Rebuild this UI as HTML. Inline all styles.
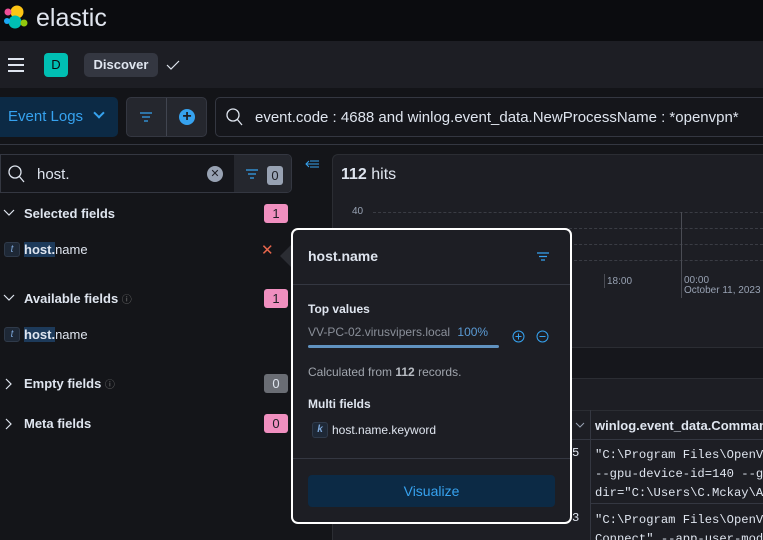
<!DOCTYPE html>
<html><head><meta charset="utf-8"><style>
*{box-sizing:border-box;margin:0;padding:0}
html,body{width:763px;height:540px;overflow:hidden}
body{background:#141519;font-family:"Liberation Sans",sans-serif;color:#dfe5ef;position:relative}
.a{position:absolute}
.b{font-weight:bold}
.badge{position:absolute;width:24px;height:19px;border-radius:3px;font-size:13px;text-align:center;line-height:19px;color:#1d1e24}
.mono{font-family:"Liberation Mono",monospace;font-size:12.2px;color:#dfe5ef}
</style></head><body>
<div class="a" style="left:0;top:0;width:763px;height:41px;background:#0b0c0f"></div>
<svg class="a" style="left:3px;top:4px" width="26" height="26" viewBox="0 0 26 26">
<circle cx="14" cy="8" r="6.5" fill="#fec514"/><circle cx="12" cy="18" r="6.5" fill="#00bfb3"/>
<circle cx="5" cy="8" r="3.5" fill="#f04e98"/><circle cx="21" cy="19" r="3.5" fill="#93c90e"/><circle cx="4" cy="17" r="3" fill="#1ba9f5"/></svg>
<div class="a" style="left:36px;top:4px;font-size:25px;color:#e0e5ee">elastic</div>
<div class="a" style="left:0;top:41px;width:763px;height:47px;background:#1d1e24"></div>
<div class="a" style="left:8px;top:58px;width:16px;height:2px;background:#dfe5ef;box-shadow:0 6px 0 #dfe5ef,0 12px 0 #dfe5ef"></div>
<div class="a" style="left:44px;top:53px;width:24px;height:24px;background:#00bfb3;border-radius:4px;color:#0b0c0f;font-size:13px;text-align:center;line-height:24px">D</div>
<div class="a b" style="left:84px;top:53px;width:74px;height:24px;background:#343741;border-radius:5px;color:#dfe5ef;font-size:13px;text-align:center;line-height:24px">Discover</div>
<svg class="a" style="left:166px;top:59px" width="14" height="12"><path d="M1 6l4 4 8-8" stroke="#dfe5ef" fill="none" stroke-width="1.2"/></svg>
<div class="a" style="left:0;top:88px;width:763px;height:57px;background:#131418;border-bottom:1px solid #343741"></div>
<div class="a" style="left:0;top:97px;width:118px;height:40px;background:#0c2a45;border-radius:0 5px 5px 0;color:#36a2ef;font-size:15px;line-height:40px;padding-left:8px;white-space:nowrap">Event Logs <span style="display:inline-block;width:8px;height:8px;border-right:2px solid #36a2ef;border-bottom:2px solid #36a2ef;transform:rotate(45deg);margin:0 0 4px 8px"></span></div>
<div class="a" style="left:126px;top:97px;width:81px;height:40px;background:#25272e;border:1px solid #343741;border-radius:5px"></div>
<div class="a" style="left:166px;top:98px;width:1px;height:38px;background:#414550"></div>
<svg class="a" style="left:140px;top:112px" width="12" height="10"><path d="M0 1h12M2 5h8M4 9h4" stroke="#36a2ef" stroke-width="1.3"/></svg>
<div class="a" style="left:179px;top:109px;width:16px;height:16px;border-radius:50%;background:#36a2ef;color:#1d1e24;font-size:16px;text-align:center;line-height:16px;font-weight:bold">+</div>
<div class="a" style="left:215px;top:97px;width:560px;height:40px;background:#15161b;border:1px solid #343741;border-radius:5px"></div>
<svg class="a" style="left:226px;top:108px" width="18" height="18"><circle cx="7" cy="7" r="6" stroke="#dfe5ef" fill="none" stroke-width="1.3"/><path d="M11 11l5 6" stroke="#dfe5ef" stroke-width="1.3"/></svg>
<div class="a" style="left:255px;top:109px;font-size:15px;color:#dfe5ef;white-space:nowrap">event.code : 4688 and winlog.event_data.NewProcessName : *openvpn*</div>
<div class="a" style="left:0;top:154px;width:292px;height:39px;background:#15161b;border:1px solid #343741;border-radius:0 5px 5px 0"></div>
<div class="a" style="left:234px;top:155px;width:57px;height:37px;background:#25272e;border-radius:0 4px 4px 0"></div>
<svg class="a" style="left:8px;top:165px" width="18" height="18"><circle cx="7" cy="7" r="6" stroke="#dfe5ef" fill="none" stroke-width="1.3"/><path d="M11 11l5 6" stroke="#dfe5ef" stroke-width="1.3"/></svg>
<div class="a" style="left:37px;top:166px;font-size:15px">host.</div>
<div class="a" style="left:207px;top:166px;width:16px;height:16px;border-radius:50%;background:#98a2b3;color:#1d1e24;font-size:11px;text-align:center;line-height:16px">✕</div>
<svg class="a" style="left:246px;top:169px" width="12" height="10"><path d="M0 1h12M2 5h8M4 9h4" stroke="#36a2ef" stroke-width="1.3"/></svg>
<div class="badge" style="left:267px;top:166px;width:16px;background:#98a2b3">0</div>
<svg class="a" style="left:305px;top:160px" width="14" height="10"><path d="M4 1L1 4l3 3M1 4h13M5 1h9M5 7h9" stroke="#36a2ef" fill="none" stroke-width="1"/></svg>
<svg class="a" style="left:3px;top:209px" width="12" height="8"><path d="M1 1l5 5 5-5" stroke="#dfe5ef" fill="none" stroke-width="1.2"/></svg>
<div class="a b" style="left:24px;top:206px;font-size:13px">Selected fields</div>
<div class="badge" style="left:264px;top:204px;background:#f08fbf">1</div>
<div class="a" style="left:4px;top:242px;width:16px;height:15px;border:1px solid #2f3a4a;background:#1e2836;border-radius:3px;color:#7da7d9;font-size:10px;text-align:center;line-height:13px;font-style:italic">t</div>
<div class="a" style="left:24px;top:242px;font-size:13px"><span class="b" style="background:#1d3a5a">host.</span>name</div>
<div class="a" style="left:261px;top:241px;color:#e7664c;font-size:15px">✕</div>
<svg class="a" style="left:3px;top:294px" width="12" height="8"><path d="M1 1l5 5 5-5" stroke="#dfe5ef" fill="none" stroke-width="1.2"/></svg>
<div class="a b" style="left:24px;top:291px;font-size:13px">Available fields <span style="font-weight:normal;color:#777;font-size:10px">ⓘ</span></div>
<div class="badge" style="left:264px;top:289px;background:#f08fbf">1</div>
<div class="a" style="left:4px;top:327px;width:16px;height:15px;border:1px solid #2f3a4a;background:#1e2836;border-radius:3px;color:#7da7d9;font-size:10px;text-align:center;line-height:13px;font-style:italic">t</div>
<div class="a" style="left:24px;top:327px;font-size:13px"><span class="b" style="background:#1d3a5a">host.</span>name</div>
<svg class="a" style="left:5px;top:378px" width="8" height="12"><path d="M1 1l5 5-5 5" stroke="#dfe5ef" fill="none" stroke-width="1.2"/></svg>
<div class="a b" style="left:24px;top:376px;font-size:13px">Empty fields <span style="font-weight:normal;color:#777;font-size:10px">ⓘ</span></div>
<div class="badge" style="left:264px;top:374px;background:#6a6d74;color:#dfe5ef">0</div>
<svg class="a" style="left:5px;top:418px" width="8" height="12"><path d="M1 1l5 5-5 5" stroke="#dfe5ef" fill="none" stroke-width="1.2"/></svg>
<div class="a b" style="left:24px;top:416px;font-size:13px">Meta fields</div>
<div class="badge" style="left:264px;top:414px;background:#f08fbf">0</div>
<div class="a" style="left:332px;top:154px;width:431px;height:386px;background:#1d1e24;border:1px solid #2b2d33;border-right:0;border-bottom:0;border-radius:6px 0 0 0"></div>
<div class="a" style="left:341px;top:166px;font-size:16px"><b>112</b> hits</div>
<div class="a" style="left:352px;top:206px;font-size:10px;color:#98a2b3">40</div>
<div class="a" style="left:373px;top:212px;width:390px;border-top:1px dashed #3a3c44"></div>
<div class="a" style="left:373px;top:228px;width:390px;border-top:1px dashed #3a3c44"></div>
<div class="a" style="left:373px;top:244px;width:390px;border-top:1px dashed #3a3c44"></div>
<div class="a" style="left:373px;top:260px;width:390px;border-top:1px dashed #3a3c44"></div>
<div class="a" style="left:681px;top:212px;width:1px;height:86px;background:#4a4c54"></div>
<div class="a" style="left:604px;top:274px;width:1px;height:14px;background:#4a4c54"></div>
<div class="a" style="left:607px;top:276px;font-size:10px;color:#98a2b3">18:00</div>
<div class="a" style="left:684px;top:276px;font-size:10px;color:#98a2b3;line-height:10px;white-space:nowrap">00:00<br>October 11, 2023</div>
<div class="a" style="left:333px;top:347px;width:430px;height:32px;background:#16171c;border-top:1px solid #2b2d33;border-bottom:1px solid #2b2d33"></div>
<div class="a" style="left:333px;top:410px;width:430px;height:30px;border-bottom:1px solid #343741;border-top:1px solid #2b2d33"></div>
<div class="a" style="left:590px;top:410px;width:1px;height:130px;background:#343741"></div>
<svg class="a" style="left:575px;top:422px" width="10" height="6"><path d="M1 1l4 4 4-4" stroke="#98a2b3" fill="none"/></svg>
<div class="a b" style="left:595px;top:418px;font-size:13px;white-space:nowrap">winlog.event_data.CommandLine</div>
<div class="a mono" style="left:572px;top:446px">5</div>
<div class="a mono" style="left:595px;top:446px;line-height:19px;white-space:pre">"C:\Program Files\OpenVPN
--gpu-device-id=140 --gpu
dir="C:\Users\C.Mckay\App</div>
<div class="a" style="left:590px;top:503px;width:173px;height:1px;background:#343741"></div>
<div class="a mono" style="left:572px;top:511px">3</div>
<div class="a mono" style="left:595px;top:511px;line-height:19px;white-space:pre">"C:\Program Files\OpenVPN
Connect" --app-user-mode</div>
<div class="a" style="left:280px;top:244px;width:0;height:0;border:12px solid transparent;border-right-color:#2b2d33;border-left:0"></div>
<div class="a" style="left:291px;top:228px;width:281px;height:296px;background:#1d1e24;border:2px solid #fff;border-radius:7px"></div>
<div class="a b" style="left:308px;top:248px;font-size:14px">host.name</div>
<svg class="a" style="left:537px;top:252px" width="12" height="9"><path d="M0 1h12M2 4.5h8M4 8h4" stroke="#36a2ef" stroke-width="1.2"/></svg>
<div class="a" style="left:293px;top:284px;width:277px;height:1px;background:#343741"></div>
<div class="a b" style="left:308px;top:302px;font-size:12px">Top values</div>
<div class="a" style="left:308px;top:325px;font-size:12px;color:#8a8f99">VV-PC-02.virusvipers.local <span style="color:#5b9bd5;margin-left:4px">100%</span></div>
<div class="a" style="left:308px;top:345px;width:191px;height:3px;background:#6092c0;border-radius:2px"></div>
<svg class="a" style="left:512px;top:330px" width="13" height="13"><circle cx="6.5" cy="6.5" r="5.5" stroke="#36a2ef" fill="none"/><path d="M3.5 6.5h6M6.5 3.5v6" stroke="#36a2ef"/></svg>
<svg class="a" style="left:536px;top:330px" width="13" height="13"><circle cx="6.5" cy="6.5" r="5.5" stroke="#36a2ef" fill="none"/><path d="M3.5 6.5h6" stroke="#36a2ef"/></svg>
<div class="a" style="left:308px;top:365px;font-size:12px;color:#a0a5ad">Calculated from <b style="color:#b8bcc3">112</b> records.</div>
<div class="a b" style="left:308px;top:397px;font-size:12px">Multi fields</div>
<div class="a" style="left:312px;top:422px;width:16px;height:16px;border:1px solid #2f3a4a;background:#1e2836;border-radius:3px;color:#7da7d9;font-size:10px;text-align:center;line-height:14px;font-style:italic;font-weight:bold">k</div>
<div class="a" style="left:332px;top:423px;font-size:12px">host.name.keyword</div>
<div class="a" style="left:293px;top:458px;width:277px;height:1px;background:#343741"></div>
<div class="a" style="left:308px;top:475px;width:247px;height:32px;background:#0c2a45;border-radius:4px;color:#36a2ef;font-size:14px;text-align:center;line-height:32px">Visualize</div>
<div class="a" style="left:0;top:0;width:763px;height:540px;overflow:hidden;pointer-events:none"></div>
</body></html>
